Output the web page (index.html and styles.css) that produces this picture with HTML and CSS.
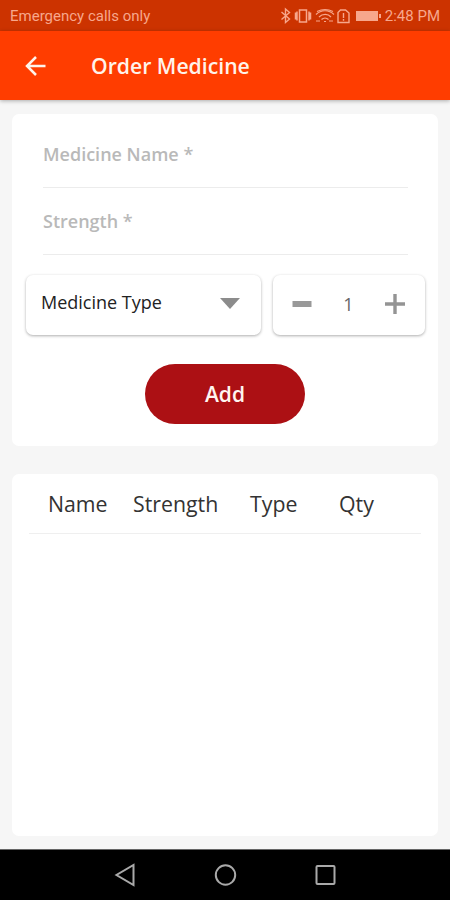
FILE: index.html
```html
<!DOCTYPE html>
<html lang="en">
<head>
<meta charset="utf-8">
<title>Order Medicine</title>
<link rel="stylesheet" href="styles.css">
</head>
<body>
<div class="screen">
  <div class="status">
    <span class="carrier">Emergency calls only</span>
    <svg class="status-icons" width="102" height="18" viewBox="0 0 102 18" fill="none" stroke="currentColor" stroke-width="1.4">
      <path d="M1.500 5l8 7-4 3.500V2l4 3.500-8 7"/>
      <path d="M19.500 3h7v12h-7zM15.500 5.500v7M17 4.500v9M29 4.500v9M30.500 5.500v7" stroke-width="1.500"/>
      <path d="M36 7.500c5-5 13-5 18 0M39 10c3.500-3.500 9-3.500 12 0M41.500 12.500c2-2 5-2 7 0M37 4.500c5-2.500 11-2.500 16 0M36 14h4M44 14.500h2M49 14h4" stroke-width="1.200"/>
      <path d="M60.500 3h5l3.500 3v9.500H58V5.500zM63.500 6v5M63.500 12v1.800"/>
      <path d="M76 4h22v10H76z" fill="currentColor" stroke="none"/>
      <path d="M99 7h2v4h-2z" fill="currentColor" stroke="none"/>
    </svg>
    <span class="time">2:48 PM</span>
  </div>
  <header class="appbar">
    <svg class="back" width="22" height="22" viewBox="0 0 22 22" fill="none" stroke="currentColor" stroke-width="2.500"><path d="M20.500 11H3M11 2L2 11l9 9"/></svg>
    <h1>Order Medicine</h1>
  </header>
  <main>
    <section class="card form">
      <div class="field name">Medicine Name *</div>
      <div class="field strength">Strength *</div>
      <div class="controls">
        <div class="box select">
          <span>Medicine Type</span>
          <svg width="20" height="11" viewBox="0 0 20 11" fill="#8c8c8c"><path d="M0 0h20L10 11z"/></svg>
        </div>
        <div class="box stepper">
          <svg width="20" height="20" viewBox="0 0 20 20" fill="#999"><path d="M0.500 7h19v6h-19z"/></svg>
          <span>1</span>
          <svg width="20" height="20" viewBox="0 0 20 20" fill="none" stroke="#949494" stroke-width="3.400"><path d="M0 10h20M10 0v20"/></svg>
        </div>
      </div>
      <button class="add">Add</button>
    </section>
    <section class="card list">
      <div class="head"><span>Name</span><span>Strength</span><span>Type</span><span>Qty</span></div>
    </section>
  </main>
  <nav class="navbar">
    <svg width="24" height="24" viewBox="0 0 24 24"><path d="M20.500 2v20L3.500 12z"/></svg>
    <svg width="24" height="24" viewBox="0 0 24 24"><circle cx="12.500" cy="12" r="9.700"/></svg>
    <svg width="24" height="24" viewBox="0 0 24 24"><rect x="3.500" y="3" width="18" height="18" rx="1"/></svg>
  </nav>
</div>
</body>
</html>
```
FILE: styles.css
```css
* { box-sizing: border-box; }
body { margin: 0; font-family: "Open Sans", "Noto Sans", sans-serif; }
.screen { width: 450px; height: 900px; display: flex; flex-direction: column; background: #f6f6f6; overflow: hidden; }
svg { display: block; flex: none; }
.status { height: 31px; flex: none; display: flex; align-items: center; padding: 1px 10px 0 10px; background: #cc3300; color: #f7a78c; font: 15px/18px Roboto, sans-serif; white-space: nowrap; }
.carrier { flex: 1; }
.status-icons { margin-right: 3px; }
.appbar { position: relative; height: 69px; flex: none; display: flex; align-items: center; padding-left: 25px; background: #ff3d00; color: #fff3ea; box-shadow: 0 1px 4px rgba(0, 0, 0, .3); }
h1 { margin: 0 0 0 44px; font-size: 21.200px; line-height: 30px; font-weight: 600; }
main { flex: 1; padding: 14px 12px 13px; display: flex; flex-direction: column; gap: 28px; }
.card { background: #fff; border-radius: 7px; }
.form { height: 332px; flex: none; padding: 0 13px 0 14px; }
.field { margin: 0 17px; border-bottom: 1px solid #ececec; color: #b9b9b9; font-size: 18px; font-weight: 600; line-height: 24px; white-space: nowrap; }
.name { height: 74px; padding-top: 28px; }
.strength { height: 67px; padding-top: 21px; }
.controls { display: flex; gap: 12px; margin-top: 20px; }
.box { height: 60px; border-radius: 7px; background: #fff; box-shadow: 0 1px 3px rgba(0, 0, 0, .32); display: flex; align-items: center; justify-content: space-between; }
.select { width: 235px; padding: 0 21px 3px 15px; color: #222; font-size: 18px; }
.select span { margin-top: -3px; }
.stepper { flex: 1; padding: 0 20px 2px 19px; color: #666; font-size: 18px; }
.add { display: block; width: 160px; height: 60px; margin: 29px auto 0 119px; border: 0; border-radius: 30px; background: #ac1014; color: #fff5f0; font: 600 21px/60px "Open Sans", sans-serif; padding: 0; }
.list { flex: none; height: 362px; padding: 0 17px; }
.head { height: 60px; display: grid; grid-template-columns: 85px 117px 89px 1fr; padding-left: 19px; border-bottom: 1px solid #efefef; color: #333; font-size: 21.300px; line-height: 59px; }
.navbar { height: 51px; flex: none; display: flex; justify-content: center; align-items: center; gap: 76px; background: #000; border-top: 1px solid #666; }
.navbar svg { fill: none; stroke: #a9a9a9; stroke-width: 2; }
```
